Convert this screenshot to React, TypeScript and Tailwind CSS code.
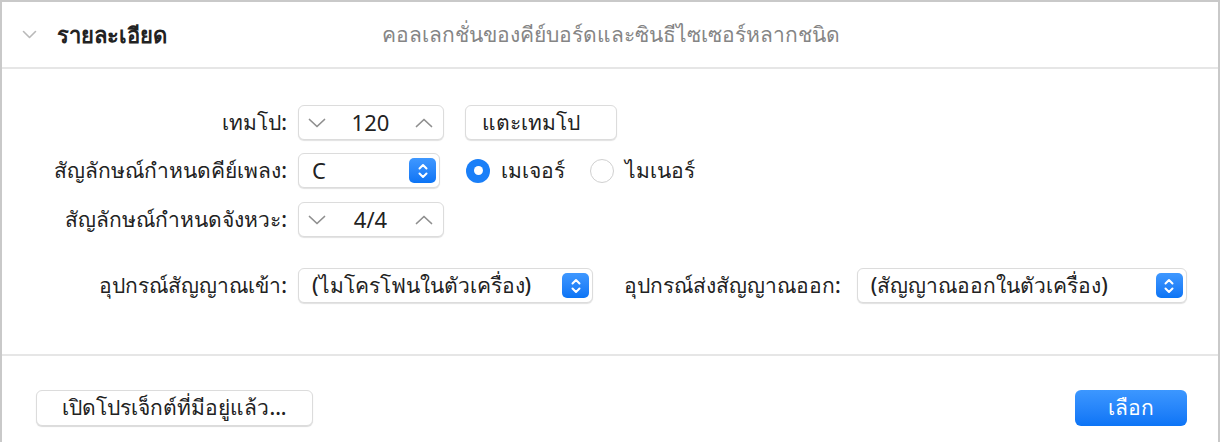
const font = { fontFamily: '"Noto Sans", "Liberation Sans", sans-serif' };

const Chev = ({ up = false }: { up?: boolean }) => (
  <svg width="18" height="10" viewBox="0 0 18 10" fill="none" stroke="#8f8f8f" strokeWidth="1.7" strokeLinecap="round" strokeLinejoin="round">
    <path d={up ? "M1.5 8.5 9 1.5l7.5 7" : "M1.5 1.5 9 8.5l7.5-7"} />
  </svg>
);

const Stepper = ({ value }: { value: string }) => (
  <div className="flex items-center justify-between w-[146px] h-[35px] pl-[9px] pr-[10px] bg-white rounded-md border border-[#dcdcdc] shadow-[0_1px_1px_rgba(0,0,0,0.12)]">
    <Chev />
    <span className="text-[22px] text-[#222]">{value}</span>
    <Chev up />
  </div>
);

const UpDown = () => (
  <div className="w-[27px] h-[25px] rounded-[5px] bg-gradient-to-b from-[#3f98ff] to-[#0a74f5] flex items-center justify-center">
    <svg width="12" height="18" viewBox="0 0 12 18" fill="none" stroke="white" strokeWidth="2" strokeLinecap="round" strokeLinejoin="round">
      <path d="M2.5 6.5 6 3l3.5 3.5" />
      <path d="M2.5 11.5 6 15l3.5-3.5" />
    </svg>
  </div>
);

const Select = ({ value, w, big = false }: { value: string; w: string; big?: boolean }) => (
  <div className={`flex items-center justify-between ${w} h-[35px] pl-[13px] pr-[3px] bg-white rounded-md border border-[#dcdcdc] shadow-[0_1px_1px_rgba(0,0,0,0.12)]`}>
    <span className={`${big ? "text-[22px]" : "text-[21px] font-medium"} text-[#222]`}>{value}</span>
    <UpDown />
  </div>
);

const Label = ({ children }: { children: string }) => (
  <div className="w-[296px] pr-[11px] text-right text-[21px] font-medium text-[#222] shrink-0">{children}</div>
);

export default function App() {
  return (
    <div style={font} className="w-[1221px] h-[442px] bg-white overflow-hidden">
      <div className="mr-[1px] h-[442px] border-l-2 border-r-2 border-t-2 border-[#c9c9c9] flex flex-col">
        <div className="h-[67px] flex items-center border-b-2 border-[#e6e6e6] shrink-0">
          <svg className="ml-[20px]" width="15" height="9" viewBox="0 0 15 9" fill="none" stroke="#b9b9b9" strokeWidth="1.6" strokeLinecap="round" strokeLinejoin="round">
            <path d="M1.5 1.5 7.5 7.5l6-6" />
          </svg>
          <span className="ml-[20px] text-[22px] font-bold text-[#222]">รายละเอียด</span>
          <span className="ml-[215px] text-[21px] text-[#858585]">คอลเลกชั่นของคีย์บอร์ดและซินธีไซเซอร์หลากชนิด</span>
        </div>

        <div className="flex flex-col pt-[36px] h-[287px] border-b-2 border-[#e6e6e6] shrink-0">
          <div className="flex items-center">
            <Label>เทมโป:</Label>
            <Stepper value="120" />
            <div className="ml-[21px] w-[152px] h-[35px] flex items-center pl-[16px] bg-white rounded-md border border-[#dcdcdc] shadow-[0_1px_1px_rgba(0,0,0,0.12)] text-[21px] font-medium text-[#222]">
              แตะเทมโป
            </div>
          </div>
          <div className="flex items-center mt-[13px]">
            <Label>สัญลักษณ์กำหนดคีย์เพลง:</Label>
            <Select value="C" w="w-[142px]" big />
            <div className="ml-[26px] w-[24px] h-[24px] rounded-full bg-[#1a7ff8] flex items-center justify-center">
              <div className="w-[9px] h-[9px] rounded-full bg-white" />
            </div>
            <span className="ml-[11px] text-[21px] font-medium text-[#222]">เมเจอร์</span>
            <div className="ml-[25px] w-[24px] h-[24px] rounded-full border border-[#d0d0d0] bg-white" />
            <span className="ml-[11px] text-[21px] font-medium text-[#222]">ไมเนอร์</span>
          </div>
          <div className="flex items-center mt-[14px]">
            <Label>สัญลักษณ์กำหนดจังหวะ:</Label>
            <Stepper value="4/4" />
          </div>
          <div className="flex items-center mt-[31px]">
            <Label>อุปกรณ์สัญญาณเข้า:</Label>
            <Select value="(ไมโครโฟนในตัวเครื่อง)" w="w-[295px]" />
            <span className="ml-[31px] mr-[16px] text-[21px] font-medium text-[#222]">อุปกรณ์ส่งสัญญาณออก:</span>
            <Select value="(สัญญาณออกในตัวเครื่อง)" w="w-[330px]" />
          </div>
        </div>

        <div className="flex items-center justify-between pl-[34px] pr-[31px] pt-[34px]">
          <div className="w-[277px] h-[36px] flex items-center justify-center bg-white rounded-md border border-[#dcdcdc] shadow-[0_1px_1px_rgba(0,0,0,0.15)] text-[21px] font-medium text-[#222]">
            เปิดโปรเจ็กต์ที่มีอยู่แล้ว...
          </div>
          <div className="w-[112px] h-[36px] flex items-center justify-center rounded-md bg-gradient-to-b from-[#3c97ff] to-[#0b74f6] text-[21px] font-medium text-white">
            เลือก
          </div>
        </div>
      </div>
    </div>
  );
}
